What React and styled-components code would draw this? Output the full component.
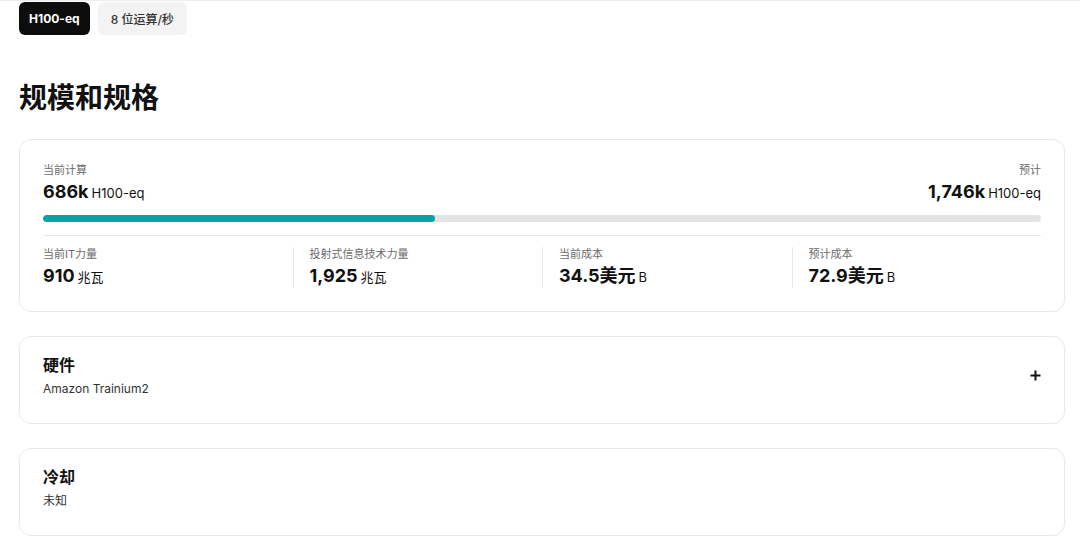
import React from "react";
import styled, { createGlobalStyle } from "styled-components";

const GlobalStyle = createGlobalStyle`
  body {
    margin: 0;
    background: #fff;
    font-family: Inter, "Noto Sans CJK SC", sans-serif;
    color: #111;
  }
`;

const Page = styled.div`
  border-top: 1px solid #ededed;
  padding: 1px 15px 0 19px;
`;

const Tabs = styled.div`
  display: flex;
  gap: 8px;
`;

const Tab = styled.button`
  height: 33px;
  padding: 0 ${(p) => (p.active ? "10px" : "13px")};
  border: none;
  border-radius: 6px;
  font-family: inherit;
  font-size: 12px;
  font-weight: ${(p) => (p.active ? 700 : 500)};
  background: ${(p) => (p.active ? "#0d0d0d" : "#f3f3f3")};
  color: ${(p) => (p.active ? "#fff" : "#333")};
`;

const Title = styled.h1`
  margin: 46px 0 24px;
  font-size: 28px;
  line-height: 34px;
  font-weight: 700;
`;

const Card = styled.section`
  border: 1px solid #e8e8e8;
  border-radius: 12px;
  padding: 23px;
  margin-bottom: 24px;
`;

const Row = styled.div`
  display: flex;
  justify-content: space-between;
`;

const Block = styled.div`
  text-align: ${(p) => (p.right ? "right" : "left")};
`;

const Label = styled.div`
  font-size: 11px;
  line-height: 14px;
  color: #6b6b6b;
`;

const Value = styled.div`
  margin-top: 4px;
  font-size: 18px;
  line-height: 22px;
  font-weight: 700;
  color: #111;
`;

const Unit = styled.span`
  font-size: 13px;
  font-weight: 400;
  margin-left: 3px;
`;

const Track = styled.div`
  margin-top: 11px;
  height: 7px;
  border-radius: 4px;
  background: #e4e4e4;
  overflow: hidden;
`;

const Fill = styled.div`
  height: 100%;
  border-radius: 4px;
  background: #00a5a4;
`;

const Divider = styled.hr`
  border: none;
  border-top: 1px solid #e8e8e8;
  margin: 13px 0 11px;
`;

const Stats = styled.div`
  display: grid;
  grid-template-columns: repeat(4, 1fr);
`;

const Stat = styled.div`
  padding-left: ${(p) => (p.first ? "0" : "16px")};
  border-left: ${(p) => (p.first ? "none" : "1px solid #e8e8e8")};
`;

const Accordion = styled(Card)`
  display: flex;
  align-items: center;
  justify-content: space-between;
  padding: 17px 23px 26px;
`;

const AccTitle = styled.div`
  font-size: 16px;
  line-height: 22px;
  font-weight: 700;
`;

const AccSub = styled.div`
  margin-top: 5px;
  font-size: 12px;
  line-height: 16px;
  color: #333;
`;

const Plus = styled.svg`
  width: 11px;
  height: 11px;
`;

const stats = [
  { label: "当前IT力量", value: "910", unit: "兆瓦" },
  { label: "投射式信息技术力量", value: "1,925", unit: "兆瓦" },
  { label: "当前成本", value: "34.5美元", unit: "B" },
  { label: "预计成本", value: "72.9美元", unit: "B" },
];

export default function App() {
  const current = 686;
  const projected = 1746;
  return (
    <Page>
      <GlobalStyle />
      <Tabs>
        <Tab active>H100-eq</Tab>
        <Tab>8 位运算/秒</Tab>
      </Tabs>
      <Title>规模和规格</Title>
      <Card>
        <Row>
          <Block>
            <Label>当前计算</Label>
            <Value>
              686k<Unit>H100-eq</Unit>
            </Value>
          </Block>
          <Block right>
            <Label>预计</Label>
            <Value>
              1,746k<Unit>H100-eq</Unit>
            </Value>
          </Block>
        </Row>
        <Track>
          <Fill style={{ width: `${(current / projected) * 100}%` }} />
        </Track>
        <Divider />
        <Stats>
          {stats.map((s, i) => (
            <Stat key={s.label} first={i === 0}>
              <Label>{s.label}</Label>
              <Value>
                {s.value}
                <Unit>{s.unit}</Unit>
              </Value>
            </Stat>
          ))}
        </Stats>
      </Card>
      <Accordion>
        <div>
          <AccTitle>硬件</AccTitle>
          <AccSub>Amazon Trainium2</AccSub>
        </div>
        <Plus viewBox="0 0 11 11">
          <path d="M5.5 0.5v10M0.5 5.5h10" stroke="#111" strokeWidth="2" />
        </Plus>
      </Accordion>
      <Accordion>
        <div>
          <AccTitle>冷却</AccTitle>
          <AccSub>未知</AccSub>
        </div>
      </Accordion>
    </Page>
  );
}
